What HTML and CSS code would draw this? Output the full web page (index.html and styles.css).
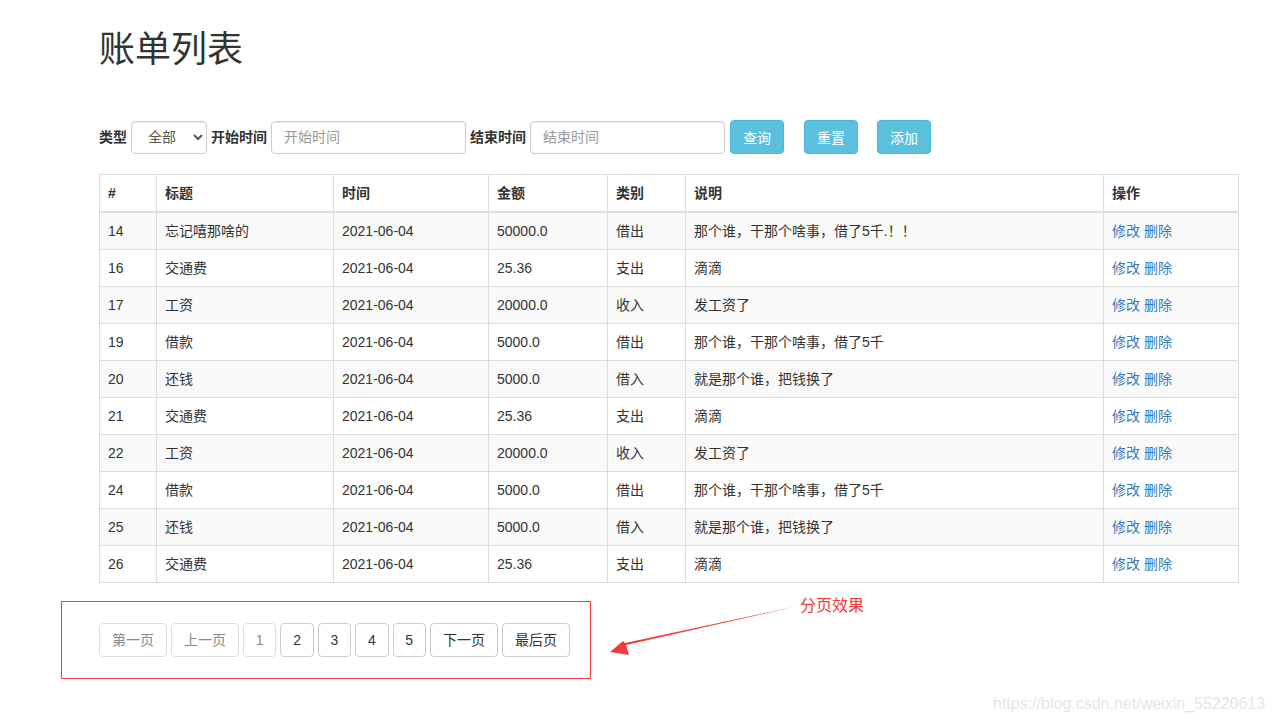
FILE: index.html
```html
<!DOCTYPE html>
<html lang="zh">
<head>
<meta charset="utf-8">
<title>账单列表</title>
<link rel="stylesheet" href="styles.css">
</head>
<body>
<div class="page">
  <h1 class="title">账单列表</h1>
  <form class="search">
    <label class="lbl">类型</label>
    <select class="ctl sel"><option>全部</option></select>
    <label class="lbl">开始时间</label>
    <input class="ctl inp" placeholder="开始时间">
    <label class="lbl">结束时间</label>
    <input class="ctl inp" placeholder="结束时间">
    <button type="button" class="btn info b1">查询</button>
    <button type="button" class="btn info b2">重置</button>
    <button type="button" class="btn info b3">添加</button>
  </form>
  <table class="tbl">
    <colgroup>
      <col class="c1"><col class="c2"><col class="c3"><col class="c4"><col class="c5"><col class="c6"><col class="c7">
    </colgroup>
    <thead>
      <tr><th>#</th><th>标题</th><th>时间</th><th>金额</th><th>类别</th><th>说明</th><th>操作</th></tr>
    </thead>
    <tbody>
      <tr><td>14</td><td>忘记嘻那啥的</td><td>2021-06-04</td><td>50000.0</td><td>借出</td><td>那个谁，干那个啥事，借了5千.！！</td><td><a href="#">修改</a> <a href="#">删除</a></td></tr>
      <tr><td>16</td><td>交通费</td><td>2021-06-04</td><td>25.36</td><td>支出</td><td>滴滴</td><td><a href="#">修改</a> <a href="#">删除</a></td></tr>
      <tr><td>17</td><td>工资</td><td>2021-06-04</td><td>20000.0</td><td>收入</td><td>发工资了</td><td><a href="#">修改</a> <a href="#">删除</a></td></tr>
      <tr><td>19</td><td>借款</td><td>2021-06-04</td><td>5000.0</td><td>借出</td><td>那个谁，干那个啥事，借了5千</td><td><a href="#">修改</a> <a href="#">删除</a></td></tr>
      <tr><td>20</td><td>还钱</td><td>2021-06-04</td><td>5000.0</td><td>借入</td><td>就是那个谁，把钱换了</td><td><a href="#">修改</a> <a href="#">删除</a></td></tr>
      <tr><td>21</td><td>交通费</td><td>2021-06-04</td><td>25.36</td><td>支出</td><td>滴滴</td><td><a href="#">修改</a> <a href="#">删除</a></td></tr>
      <tr><td>22</td><td>工资</td><td>2021-06-04</td><td>20000.0</td><td>收入</td><td>发工资了</td><td><a href="#">修改</a> <a href="#">删除</a></td></tr>
      <tr><td>24</td><td>借款</td><td>2021-06-04</td><td>5000.0</td><td>借出</td><td>那个谁，干那个啥事，借了5千</td><td><a href="#">修改</a> <a href="#">删除</a></td></tr>
      <tr><td>25</td><td>还钱</td><td>2021-06-04</td><td>5000.0</td><td>借入</td><td>就是那个谁，把钱换了</td><td><a href="#">修改</a> <a href="#">删除</a></td></tr>
      <tr><td>26</td><td>交通费</td><td>2021-06-04</td><td>25.36</td><td>支出</td><td>滴滴</td><td><a href="#">修改</a> <a href="#">删除</a></td></tr>
    </tbody>
  </table>
  <div class="pager-wrap">
    <div class="pager">
      <span class="pg disabled">第一页</span>
      <span class="pg disabled">上一页</span>
      <span class="pg num disabled">1</span>
      <span class="pg num">2</span>
      <span class="pg num">3</span>
      <span class="pg num">4</span>
      <span class="pg num">5</span>
      <span class="pg">下一页</span>
      <span class="pg">最后页</span>
    </div>
  </div>
</div>
<div class="note">分页效果</div>
<svg class="arrow" width="200" height="60" viewBox="600 600 200 60">
  <polygon points="798,606 626,645 629,655 610,652 623,641 625,643" fill="#f23c3c"/>
</svg>
<div class="watermark">https://blog.csdn.net/weixin_55220613</div>
</body>
</html>
```
FILE: styles.css
```css
* { box-sizing: border-box; }
html, body { margin: 0; padding: 0; background: #fff; }
body {
  font-family: "Liberation Sans", "Noto Sans CJK SC", sans-serif;
  font-size: 14px;
  line-height: 20px;
  color: #333;
  width: 1274px;
  height: 723px;
  position: relative;
  overflow: hidden;
}
.page { padding-left: 99px; width: 1239px; }
.title {
  font-family: "Liberation Sans", "Noto Sans CJK SC", sans-serif;
  font-size: 36px;
  font-weight: 400;
  line-height: 40px;
  margin: 30px 0 0 0;
  color: #333;
}
.search {
  display: flex;
  align-items: center;
  margin-top: 50px;
  height: 34px;
}
.lbl { font-weight: bold; margin-right: 4px; }
.ctl {
  height: 33px;
  border: 1px solid #ccc;
  border-radius: 4px;
  font-family: inherit;
  font-size: 14px;
  color: #555;
  background: #fff;
  padding: 6px 12px;
  box-shadow: inset 0 1px 1px rgba(0,0,0,.075);
  margin-right: 4px;
}
.sel { width: 76px; padding-left: 12px; }
.inp { width: 195px; }
.inp::placeholder { color: #999; }
.btn {
  height: 34px;
  font-family: inherit;
  font-size: 14px;
  padding: 6px 12px;
  border-radius: 4px;
  border: 1px solid #46b8da;
  background: #5bc0de;
  color: #fff;
}
.b1 { margin-left: 1px; }
.b2 { margin-left: 20px; }
.b3 { margin-left: 19px; }
.tbl {
  margin-top: 20px;
  width: 1139px;
  border-collapse: collapse;
  border: 1px solid #ddd;
  table-layout: fixed;
}
.c1 { width: 57px; } .c2 { width: 177px; } .c3 { width: 155px; } .c4 { width: 119px; }
.c5 { width: 78px; } .c6 { width: 418px; } .c7 { width: 135px; }
.tbl th, .tbl td {
  border: 1px solid #ddd;
  padding: 8px;
  text-align: left;
  line-height: 20px;
  white-space: nowrap;
}
.tbl th { border-bottom-width: 2px; font-weight: bold; vertical-align: bottom; }
.tbl tbody tr:nth-child(odd) { background: #f9f9f9; }
.tbl a { color: #337ab7; text-decoration: none; }
.pager-wrap {
  margin: 18px 0 0 -38px;
  width: 530px;
  height: 78px;
  border: 1px solid #f23c3c;
  padding: 21px 0 0 37px;
}
.pager { display: flex; gap: 4px; }
.pg {
  display: inline-block;
  height: 34px;
  padding: 6px 12px;
  border: 1px solid #ccc;
  border-radius: 4px;
  color: #333;
  background: #fff;
  font-size: 14px;
  line-height: 20px;
}
.pg.num { width: 33.4px; padding: 6px 0; text-align: center; }
.pg.disabled { border-color: #ddd; color: #888; }
.note {
  position: absolute;
  left: 800px;
  top: 596px;
  color: #f23c3c;
  font-size: 16px;
  line-height: 20px;
}
.arrow { position: absolute; left: 600px; top: 600px; }
.watermark {
  position: absolute;
  left: 993px;
  top: 694px;
  color: #e6e6e6;
  font-size: 16px;
  line-height: 20px;
}
```
